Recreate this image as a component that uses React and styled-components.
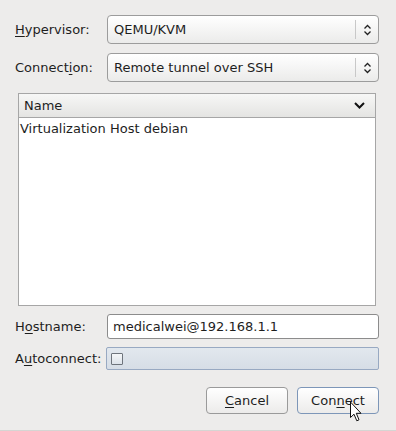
import styled, { createGlobalStyle } from "styled-components";

const GlobalStyle = createGlobalStyle`
  html, body {
    margin: 0;
    padding: 0;
    background: #edeceb;
  }
  body {
    font-family: "DejaVu Sans", "Liberation Sans", sans-serif;
    font-size: 13px;
    color: #1e1e1e;
  }
`;

function Mnemonic({ text, index }) {
  return (
    <>
      {text.slice(0, index)}
      <u>{text[index]}</u>
      {text.slice(index + 1)}
    </>
  );
}

function UpDownIcon() {
  return (
    <svg width="9" height="12" viewBox="0 0 9 12">
      <path d="M1.5 4.5 L4.5 1.5 L7.5 4.5" fill="none" stroke="#222" strokeWidth="1.3" />
      <path d="M1.5 7.5 L4.5 10.5 L7.5 7.5" fill="none" stroke="#222" strokeWidth="1.3" />
    </svg>
  );
}

function ChevronDown() {
  return (
    <svg width="11" height="7" viewBox="0 0 11 7">
      <path d="M1 1 L5.5 5.5 L10 1" fill="none" stroke="#111" strokeWidth="2" />
    </svg>
  );
}

function Cursor() {
  return (
    <CursorWrap width="14" height="22" viewBox="0 0 14 22">
      <path
        d="M1.5 1 L1.5 16.5 L5 13.2 L7.8 19.8 L10 18.8 L7.3 12.3 L12 12.3 Z"
        fill="#fff"
        stroke="#111"
        strokeWidth="1"
        strokeLinejoin="round"
      />
    </CursorWrap>
  );
}

export default function App() {
  return (
    <>
      <GlobalStyle />
      <Dialog>
        <FormGrid>
          <Label>
            <Mnemonic text="Hypervisor:" index={0} />
          </Label>
          <Combo>
            <ComboText>QEMU/KVM</ComboText>
            <ComboArrow>
              <UpDownIcon />
            </ComboArrow>
          </Combo>
          <Label>
            <Mnemonic text="Connection:" index={7} />
          </Label>
          <Combo>
            <ComboText>Remote tunnel over SSH</ComboText>
            <ComboArrow>
              <UpDownIcon />
            </ComboArrow>
          </Combo>
        </FormGrid>

        <Tree>
          <TreeHeader>
            <span>Name</span>
            <ChevronDown />
          </TreeHeader>
          <TreeRow>Virtualization Host debian</TreeRow>
        </Tree>

        <FormGrid $compact>
          <Label>
            <Mnemonic text="Hostname:" index={1} />
          </Label>
          <Entry>medicalwei@192.168.1.1</Entry>
          <Label>
            <Mnemonic text="Autoconnect:" index={1} />
          </Label>
          <CheckRow>
            <CheckBox />
          </CheckRow>
        </FormGrid>

        <ButtonRow>
          <Button>
            <Mnemonic text="Cancel" index={0} />
          </Button>
          <Button $focused>
            <Mnemonic text="Connect" index={3} />
            <Cursor />
          </Button>
        </ButtonRow>
      </Dialog>
    </>
  );
}

const Dialog = styled.div`
  box-sizing: border-box;
  width: 396px;
  height: 431px;
  padding: 15px 17px 0 15px;
  display: flex;
  flex-direction: column;
  border-bottom: 1px solid #d6d5d3;
`;

const FormGrid = styled.div`
  display: grid;
  grid-template-columns: 92px 1fr;
  row-gap: ${(p) => (p.$compact ? "8px" : "9px")};
  align-items: center;
`;

const Label = styled.div`
  white-space: nowrap;
  u {
    text-decoration-thickness: 1px;
    text-underline-offset: 2px;
  }
`;

const Combo = styled.div`
  box-sizing: border-box;
  height: 29px;
  display: flex;
  align-items: stretch;
  border: 1px solid #9c9c9c;
  border-radius: 4px;
  background: linear-gradient(#ffffff, #ebebea);
`;

const ComboText = styled.div`
  flex: 1;
  display: flex;
  align-items: center;
  padding-left: 6px;
`;

const ComboArrow = styled.div`
  width: 22px;
  display: flex;
  align-items: center;
  justify-content: center;
  margin: 4px 0;
  border-left: 1px solid #c8c8c8;
`;

const Tree = styled.div`
  box-sizing: border-box;
  height: 213px;
  margin: 11px 3px 8px 3px;
  border: 1px solid #a6a6a6;
  background: #fff;
`;

const TreeHeader = styled.div`
  box-sizing: border-box;
  height: 24px;
  display: flex;
  align-items: center;
  justify-content: space-between;
  padding: 0 10px 0 5px;
  border-bottom: 1px solid #a6a6a6;
  background: linear-gradient(#f7f7f6, #e4e4e2);
`;

const TreeRow = styled.div`
  padding: 3px 1px;
`;

const Entry = styled.div`
  box-sizing: border-box;
  height: 25px;
  display: flex;
  align-items: center;
  padding-left: 5px;
  border: 1px solid #8c8c8c;
  border-radius: 3px;
  background: #fff;
`;

const CheckRow = styled.div`
  box-sizing: border-box;
  height: 23px;
  margin-left: -1px;
  display: flex;
  align-items: center;
  padding-left: 4px;
  border: 1px solid #98a9c2;
  border-radius: 2px;
  background: linear-gradient(#e2e8ee, #d6dde6);
`;

const CheckBox = styled.div`
  box-sizing: border-box;
  width: 12px;
  height: 12px;
  border: 1px solid #6e747c;
  border-radius: 1px;
  background: linear-gradient(#f4f6f8, #dde3ea);
`;

const ButtonRow = styled.div`
  display: flex;
  justify-content: flex-end;
  gap: 9px;
  margin-top: 17px;
`;

const Button = styled.div`
  position: relative;
  box-sizing: border-box;
  width: 82px;
  height: 27px;
  display: flex;
  align-items: center;
  justify-content: center;
  border: 1px solid ${(p) => (p.$focused ? "#7d96b8" : "#9a9a9a")};
  border-radius: 4px;
  background: linear-gradient(#ffffff, #ecebea);
  u {
    text-underline-offset: 2px;
  }
`;

const CursorWrap = styled.svg`
  position: absolute;
  left: 51px;
  top: 13px;
`;
